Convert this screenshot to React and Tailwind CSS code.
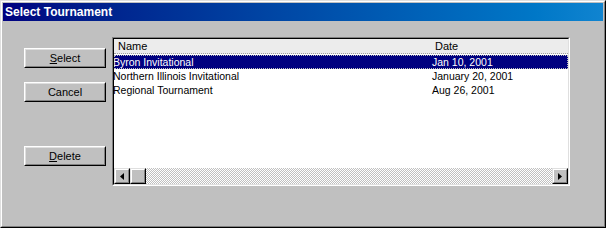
import React from "react";

const font = { fontFamily: '"Liberation Sans", Arial, sans-serif' };

function Btn({ children, className = "" }) {
  return (
    <div className={"w-[82px] h-[20px] border border-t-white border-l-white border-r-black border-b-black " + className}>
      <div className="w-full h-full border border-t-[#dfdfdf] border-l-[#dfdfdf] border-r-[#808080] border-b-[#808080] flex items-center justify-center text-[11px] text-black bg-[#c0c0c0]">
        {children}
      </div>
    </div>
  );
}

function SmallBtn({ children }) {
  return (
    <div className="w-[16px] h-[16px] shrink-0 border border-t-[#dfdfdf] border-l-[#dfdfdf] border-r-black border-b-black bg-[#c0c0c0]">
      <div className="w-full h-full border border-t-white border-l-white border-r-[#808080] border-b-[#808080] flex items-center justify-center">
        {children}
      </div>
    </div>
  );
}

const rows = [
  ["Byron Invitational", "Jan 10, 2001"],
  ["Northern Illinois Invitational", "January 20, 2001"],
  ["Regional Tournament", "Aug 26, 2001"],
];

export default function App() {
  return (
    <div style={font} className="w-[606px] h-[228px] bg-[#c0c0c0] border border-t-[#dfdfdf] border-l-[#dfdfdf] border-r-black border-b-black select-none">
      <div className="w-full h-full border border-t-white border-l-white border-r-[#808080] border-b-[#808080] p-[1px] flex flex-col">
        <div className="h-[18px] shrink-0 bg-gradient-to-r from-[#000080] to-[#1084d0] flex items-center pl-[2px]">
          <span className="text-white font-bold text-[12px] leading-none">Select Tournament</span>
        </div>
        <div className="flex flex-1">
          <div className="flex flex-col pl-[21px] pt-[27px]">
            <Btn><span><u>S</u>elect</span></Btn>
            <Btn className="mt-[14px]"><span>Cancel</span></Btn>
            <Btn className="mt-[44px]"><span><u>D</u>elete</span></Btn>
          </div>
          <div className="ml-[6px] mt-[16px] w-[458px] h-[149px] border border-t-[#808080] border-l-[#808080] border-r-white border-b-white">
            <div className="w-full h-full border border-t-black border-l-black border-r-[#dfdfdf] border-b-[#dfdfdf] bg-white flex flex-col text-[11px] text-black">
              <div className="h-[15px] shrink-0 bg-[#ececec] border-b border-dotted border-b-[#a0a0a0] flex items-center">
                <span className="pl-[4px] w-[321px]">Name</span>
                <span>Date</span>
              </div>
              <div className="flex-1 overflow-hidden pt-[1px]">
                {rows.map((r, i) => (
                  <div
                    key={i}
                    className={
                      "h-[14px] flex items-center leading-none whitespace-nowrap overflow-hidden " +
                      (i === 0 ? "bg-[#000080] text-white outline outline-1 outline-dotted outline-[#c0c0c0] -outline-offset-1" : "")
                    }
                  >
                    <span className="w-[319px] shrink-0 -ml-[1px] text-[10.5px]">{r[0]}</span>
                    <span className="text-[10.5px]">{r[1]}</span>
                  </div>
                ))}
              </div>
              <div className="h-[16px] shrink-0 flex">
                <SmallBtn>
                  <svg width="4" height="7" viewBox="0 0 4 7"><path d="M4 0 L0 3.5 L4 7 Z" fill="black" /></svg>
                </SmallBtn>
                <SmallBtn />
                <div className="flex-1 bg-[repeating-conic-gradient(#c0c0c0_0%_25%,#ffffff_0%_50%)] bg-[length:2px_2px]" />
                <SmallBtn>
                  <svg width="4" height="7" viewBox="0 0 4 7"><path d="M0 0 L4 3.5 L0 7 Z" fill="black" /></svg>
                </SmallBtn>
              </div>
            </div>
          </div>
        </div>
      </div>
    </div>
  );
}
